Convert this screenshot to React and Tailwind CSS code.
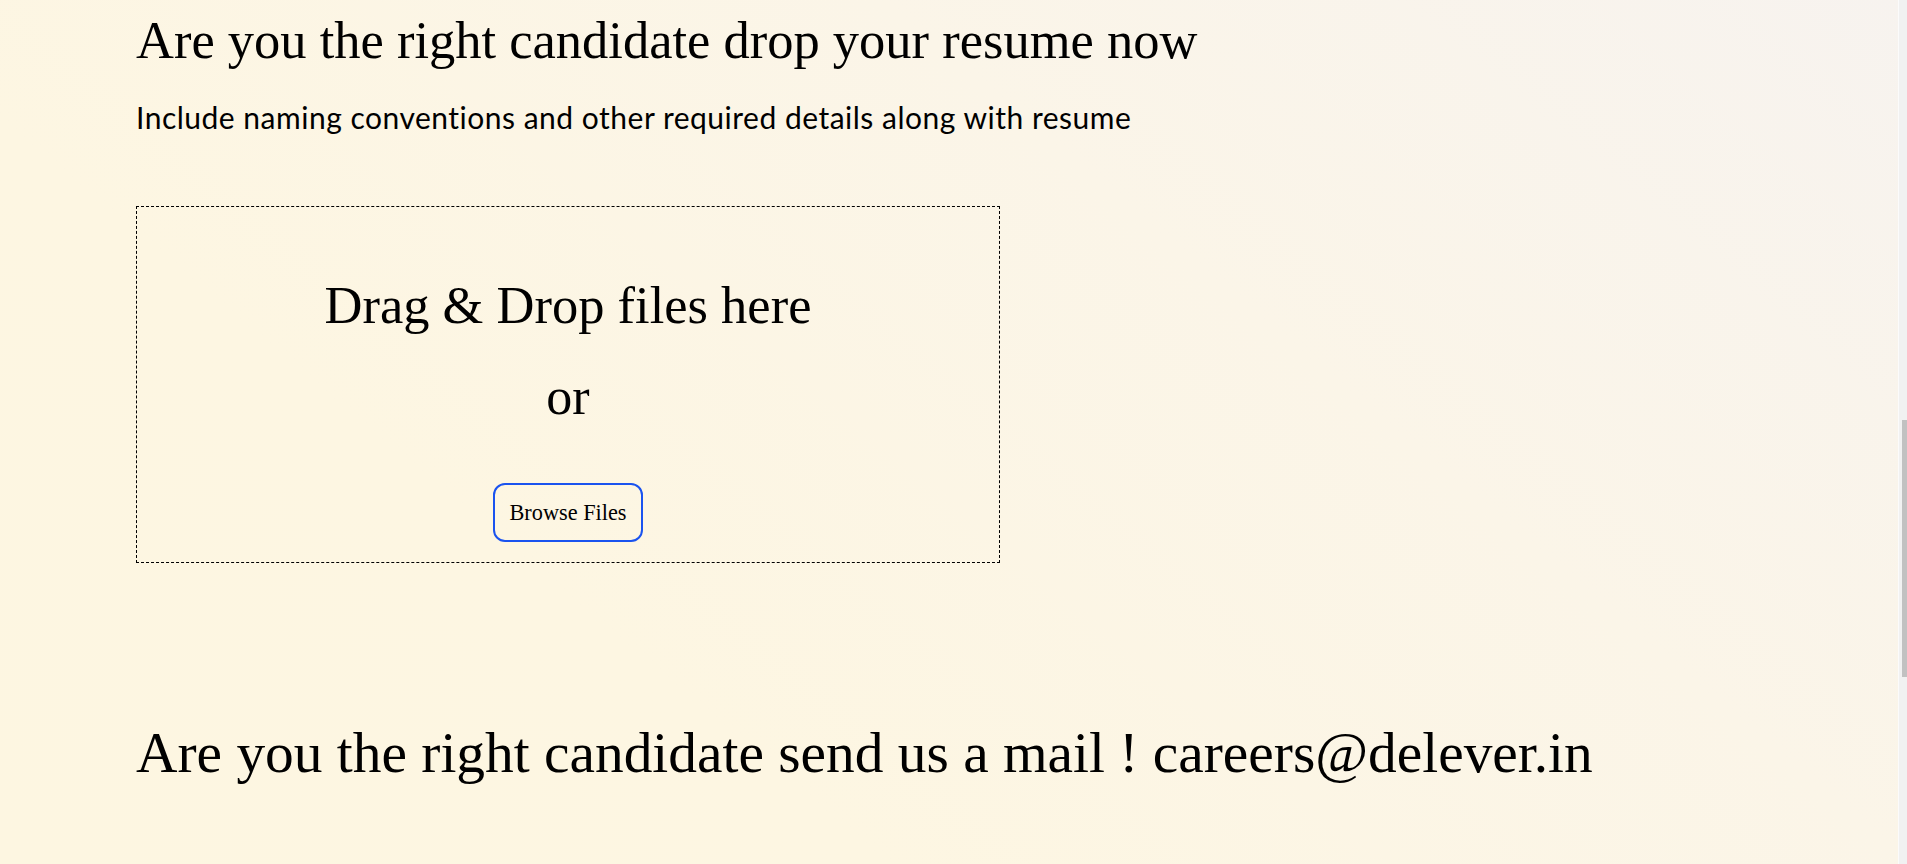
import React from 'react';

const serif = "font-['Liberation_Serif','Times_New_Roman',serif]";

const DropZone = () => (
  <div className="mt-[75px] w-[864px] h-[357px] border border-dashed border-black flex flex-col items-center pt-[72px]">
    <h2 className={`${serif} text-[52.5px] leading-[52px] text-black`}>Drag &amp; Drop files here</h2>
    <p className={`${serif} text-[52px] leading-[52px] text-black mt-[40px]`}>or</p>
    <button
      type="button"
      className={`${serif} mt-[60px] h-[59px] w-[150px] rounded-[12px] border-2 border-[#1a53ef] text-[22.3px] text-black`}
    >
      Browse Files
    </button>
  </div>
);

const Scrollbar = () => (
  <div className="w-[9px] h-screen bg-[#f1f1f1] border-l border-[#fbfbfb] flex flex-col">
    <div className="h-[420px]" />
    <div className="ml-[3px] w-[6px] h-[257px] bg-[#c1c1c1]" />
  </div>
);

export default function App() {
  return (
    <div className="flex h-screen overflow-hidden bg-[linear-gradient(220deg,#f7f3ef_0%,#fbf5e8_35%,#fdf6e2_70%,#fdf6e1_100%)]">
      <main className="flex-1 pl-[136px] pt-[14px]">
        <h1 className={`${serif} text-[52.5px] leading-[52px] text-black`}>
          Are you the right candidate drop your resume now
        </h1>
        <p className="font-['Lato','Open_Sans',sans-serif] text-[30px] tracking-[0.5px] leading-[28px] text-black mt-[37px]">
          Include naming conventions and other required details along with resume
        </p>

        <DropZone />

        <h2 className={`${serif} text-[57.4px] leading-[56px] text-black mt-[162px]`}>
          Are you the right candidate send us a mail ! careers@delever.in
        </h2>
      </main>
      <Scrollbar />
    </div>
  );
}
